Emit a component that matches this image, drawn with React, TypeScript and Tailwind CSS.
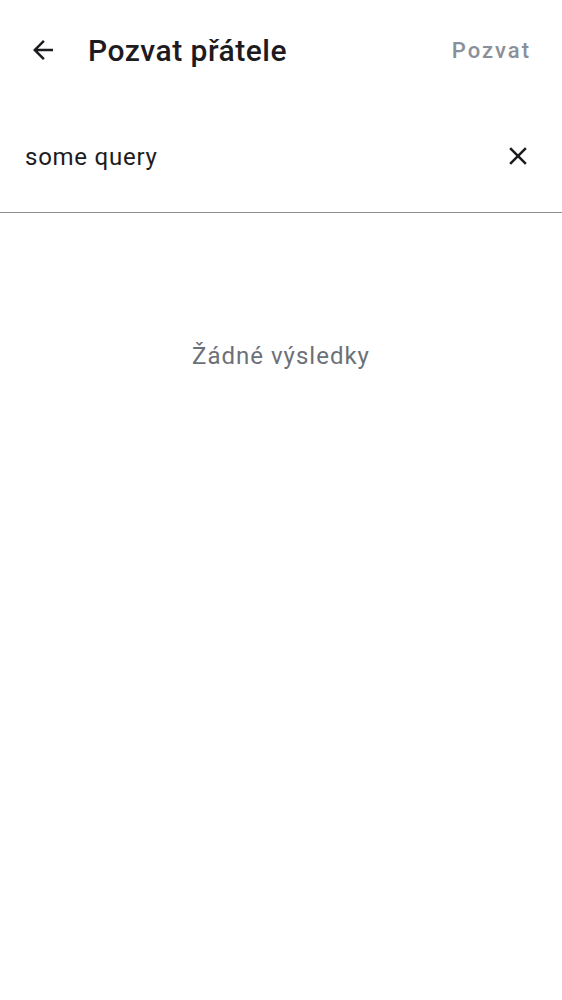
import React from "react";

export default function App() {
  return (
    <div className="w-[562px] h-[1000px] bg-white" style={{ fontFamily: "Roboto, 'Noto Sans', sans-serif" }}>
      <div className="h-[100px] flex items-center pl-[28px] pr-[32px]">
        <svg width="30" height="30" viewBox="0 0 24 24" className="text-[#1d1b20]">
          <path d="M20 11H7.83l5.59-5.59L12 4l-8 8 8 8 1.41-1.41L7.83 13H20v-2z" fill="currentColor" />
        </svg>
        <div className="ml-[30px] text-[30px] tracking-[0.5px] font-medium text-[#1d1b20] flex-1">Pozvat přátele</div>
        <div className="text-[22px] tracking-[2px] font-medium text-[#8a9099] -mr-[1px]">Pozvat</div>
      </div>
      <div className="h-[113px] flex items-start pl-[25px] pr-[29px] border-b border-[#8e8e8e]">
        <div className="mt-[39px] flex-1 text-[24px] tracking-[0.75px] text-[#1d1b20]">some query</div>
        <svg width="30" height="30" viewBox="0 0 24 24" className="mt-[41px] text-[#1d1b20]">
          <path d="M19 6.41L17.59 5 12 10.59 6.41 5 5 6.41 10.59 12 5 17.59 6.41 19 12 13.41 17.59 19 19 17.59 13.41 12z" fill="currentColor" />
        </svg>
      </div>
      <div className="pt-[125px] text-center text-[24px] tracking-[1px] text-[#6b7079]">Žádné výsledky</div>
    </div>
  );
}
